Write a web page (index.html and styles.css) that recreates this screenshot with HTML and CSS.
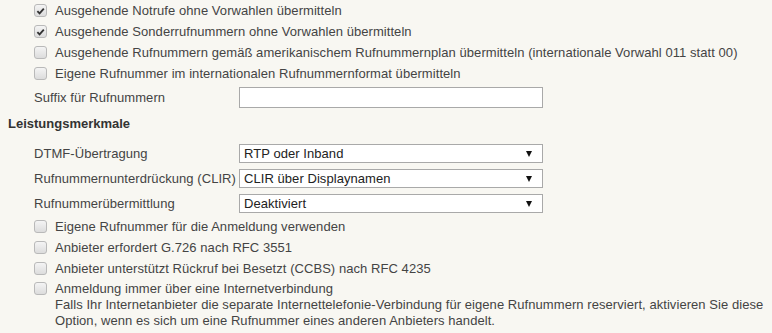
FILE: index.html
```html
<!DOCTYPE html>
<html lang="de">
<head>
<meta charset="utf-8">
<title>Rufnummern</title>
<link rel="stylesheet" href="styles.css">
</head>
<body>
<div class="page">
  <div class="opt"><span class="cb checked"><svg viewBox="0 0 12 12" width="12" height="12"><path d="M2.6 6.2 L5 8.6 L9.6 3.4" fill="none" stroke="#333" stroke-width="2"/></svg></span><span>Ausgehende Notrufe ohne Vorwahlen übermitteln</span></div>
  <div class="opt"><span class="cb checked"><svg viewBox="0 0 12 12" width="12" height="12"><path d="M2.6 6.2 L5 8.6 L9.6 3.4" fill="none" stroke="#333" stroke-width="2"/></svg></span><span>Ausgehende Sonderrufnummern ohne Vorwahlen übermitteln</span></div>
  <div class="opt"><span class="cb"></span><span>Ausgehende Rufnummern gemäß amerikanischem Rufnummernplan übermitteln (internationale Vorwahl 011 statt 00)</span></div>
  <div class="opt"><span class="cb"></span><span>Eigene Rufnummer im internationalen Rufnummernformat übermitteln</span></div>

  <div class="field field-input"><label class="lbl">Suffix für Rufnummern</label><input class="txt" type="text"></div>

  <h3 class="heading">Leistungsmerkmale</h3>

  <div class="selects">
    <div class="field"><label class="lbl">DTMF-Übertragung</label><span class="sel"><select><option>RTP oder Inband</option></select></span></div>
    <div class="field"><label class="lbl">Rufnummernunterdrückung (CLIR)</label><span class="sel"><select><option>CLIR über Displaynamen</option></select></span></div>
    <div class="field"><label class="lbl">Rufnummerübermittlung</label><span class="sel"><select><option>Deaktiviert</option></select></span></div>
  </div>

  <div class="opts2">
    <div class="opt"><span class="cb"></span><span>Eigene Rufnummer für die Anmeldung verwenden</span></div>
    <div class="opt"><span class="cb"></span><span>Anbieter erfordert G.726 nach RFC 3551</span></div>
    <div class="opt"><span class="cb"></span><span>Anbieter unterstützt Rückruf bei Besetzt (CCBS) nach RFC 4235</span></div>
    <div class="opt opt-multi"><span class="cb"></span><div class="multi"><div>Anmeldung immer über eine Internetverbindung</div><div>Falls Ihr Internetanbieter die separate Internettelefonie-Verbindung für eigene Rufnummern reserviert, aktivieren Sie diese Option, wenn es sich um eine Rufnummer eines anderen Anbieters handelt.</div></div></div>
  </div>
</div>
</body>
</html>
```
FILE: styles.css
```css
html, body {
  margin: 0;
  padding: 0;
  background: #f8f7f2;
}
body {
  font-family: "Liberation Sans", Arial, sans-serif;
  font-size: 13px;
  color: #444;
  letter-spacing: 0.06px;
}
.page {
  padding: 0 0 0 8px;
}
.opt {
  display: flex;
  align-items: center;
  height: 21px;
  padding-left: 26px;
  gap: 8px;
  white-space: nowrap;
}
.cb {
  flex: 0 0 auto;
  box-sizing: border-box;
  width: 13px;
  height: 13px;
  border: 1px solid #b9b9b9;
  border-radius: 3px;
  background: linear-gradient(#f4f4f4, #dcdcdc);
  display: flex;
  align-items: center;
  justify-content: center;
}
.cb svg {
  display: block;
}
.field {
  display: flex;
  align-items: center;
  padding-left: 26px;
}
.lbl {
  width: 205px;
  flex: 0 0 auto;
  white-space: nowrap;
}
.field-input {
  margin-top: 3px;
  height: 21px;
}
.txt {
  box-sizing: border-box;
  width: 304px;
  height: 21px;
  border: 1px solid #a9a9a9;
  background: #fff;
  margin: 0;
  padding: 0 4px;
  font: inherit;
}
.heading {
  margin: 6px 0 0 0;
  height: 20px;
  line-height: 20px;
  font-size: 13px;
  font-weight: bold;
  color: #333;
  letter-spacing: 0;
}
.selects {
  margin-top: 10px;
  display: flex;
  flex-direction: column;
  gap: 6px;
}
.selects .field {
  height: 19px;
}
.sel {
  position: relative;
  display: block;
  width: 304px;
  height: 19px;
}
.sel select {
  appearance: none;
  -webkit-appearance: none;
  box-sizing: border-box;
  width: 304px;
  height: 19px;
  margin: 0;
  border: 1px solid #a9a9a9;
  border-radius: 0;
  background: #fff;
  padding: 0 0 0 4px;
  font-family: "Liberation Sans", Arial, sans-serif;
  font-size: 13px;
  letter-spacing: 0.06px;
  color: #222;
}
.sel::after {
  content: "";
  position: absolute;
  right: 11px;
  top: 7px;
  border-left: 3.5px solid transparent;
  border-right: 3.5px solid transparent;
  border-top: 6px solid #111;
  pointer-events: none;
}
.opts2 {
  margin-top: 3px;
}
.opt-multi {
  height: auto;
  align-items: flex-start;
  padding-top: 2px;
  white-space: normal;
}
.opt-multi .cb {
  margin-top: 1px;
}
.multi {
  flex: 1 1 auto;
  line-height: 16px;
}
```
